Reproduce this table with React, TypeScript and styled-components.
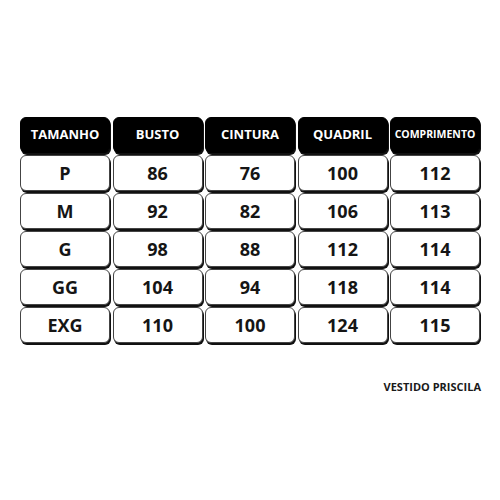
import React from 'react'
import styled, { createGlobalStyle } from 'styled-components'

const GlobalStyle = createGlobalStyle`
  html, body {
    margin: 0;
    padding: 0;
    background: #ffffff;
  }
  body {
    font-family: 'Open Sans', 'Liberation Sans', sans-serif;
  }
`

const Page = styled.div`
  width: 500px;
  height: 500px;
  display: flex;
  flex-direction: column;
  align-items: flex-end;
  padding: 117px 20px 0 20px;
  box-sizing: border-box;
`

const Table = styled.div`
  width: 460px;
  display: grid;
  grid-template-columns: repeat(5, 1fr);
  column-gap: 2.5px;
  row-gap: 2px;
`

const Cell = styled.div<{ $head?: boolean; $small?: boolean }>`
  height: 36px;
  box-sizing: border-box;
  border-radius: 6px;
  display: flex;
  align-items: center;
  justify-content: center;
  font-weight: 700;
  color: ${({ $head }) => ($head ? '#ffffff' : '#151515')};
  background: ${({ $head }) => ($head ? '#000000' : '#ffffff')};
  font-size: ${({ $head, $small }) => ($small ? '10.5px' : $head ? '13px' : '18px')};
  padding-bottom: ${({ $head }) => ($head ? '3px' : '0')};
  border: 1px solid ${({ $head }) => ($head ? '#000000' : '#444444')};
  box-shadow: 1px 2px 0 #111111;
`

const Caption = styled.div`
  margin-top: 36px;
  margin-right: -1px;
  font-size: 11px;
  font-weight: 700;
  color: #1a1a1a;
`

const headers = ['TAMANHO', 'BUSTO', 'CINTURA', 'QUADRIL', 'COMPRIMENTO']

const rows = [
  ['P', '86', '76', '100', '112'],
  ['M', '92', '82', '106', '113'],
  ['G', '98', '88', '112', '114'],
  ['GG', '104', '94', '118', '114'],
  ['EXG', '110', '100', '124', '115'],
]

export default function App() {
  return (
    <>
      <GlobalStyle />
      <Page>
        <Table>
          {headers.map((h) => (
            <Cell key={h} $head $small={h === 'COMPRIMENTO'}>{h}</Cell>
          ))}
          {rows.map((row) =>
            row.map((v, i) => <Cell key={row[0] + i}>{v}</Cell>),
          )}
        </Table>
        <Caption>VESTIDO PRISCILA</Caption>
      </Page>
    </>
  )
}
